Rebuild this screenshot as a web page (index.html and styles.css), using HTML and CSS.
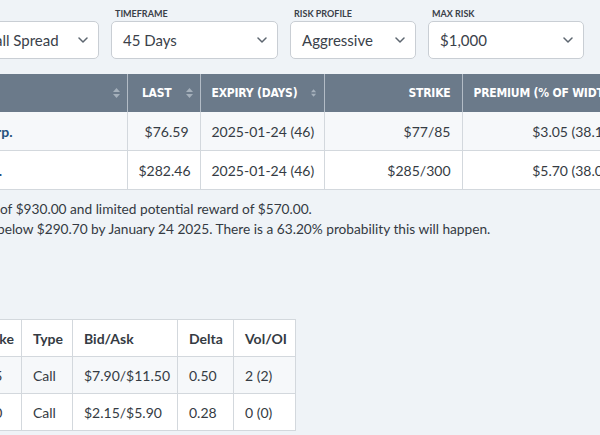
FILE: index.html
```html
<!DOCTYPE html>
<html lang="en">
<head>
<meta charset="utf-8">
<title>Option Screener</title>
<link rel="stylesheet" href="styles.css">
</head>
<body>
<div class="page">
  <div class="filters">
    <div class="field f-strategy">
      <span class="label">Strategy</span>
      <div class="select"><span class="value">Bear Call Spread</span><svg class="chev" width="10" height="6" viewBox="0 0 10 6"><polyline points="1,1 5,5 9,1"/></svg></div>
    </div>
    <div class="field f-timeframe">
      <span class="label">Timeframe</span>
      <div class="select"><span class="value">45 Days</span><svg class="chev" width="10" height="6" viewBox="0 0 10 6"><polyline points="1,1 5,5 9,1"/></svg></div>
    </div>
    <div class="field f-risk">
      <span class="label">Risk Profile</span>
      <div class="select"><span class="value">Aggressive</span><svg class="chev" width="10" height="6" viewBox="0 0 10 6"><polyline points="1,1 5,5 9,1"/></svg></div>
    </div>
    <div class="field f-max">
      <span class="label">Max Risk</span>
      <div class="select"><span class="value">$1,000</span><svg class="chev" width="10" height="6" viewBox="0 0 10 6"><polyline points="1,1 5,5 9,1"/></svg></div>
    </div>
  </div>

  <table class="results">
    <colgroup>
      <col class="w-name"><col class="w-last"><col class="w-expiry"><col class="w-strike"><col class="w-premium">
    </colgroup>
    <thead>
      <tr>
        <th class="left sortable"><span class="th-in">Stock<svg class="sort" width="7" height="10" viewBox="0 0 7 10"><path d="M3.5 0 L7 4 H0 Z M3.5 10 L7 6 H0 Z"/></svg></span></th>
        <th class="right sortable"><span class="th-in th-end">Last<svg class="sort" width="7" height="10" viewBox="0 0 7 10"><path d="M3.5 0 L7 4 H0 Z M3.5 10 L7 6 H0 Z"/></svg></span></th>
        <th class="left sortable"><span class="th-in">Expiry (Days)<svg class="sort" width="7" height="10" viewBox="0 0 7 10"><path d="M3.5 0 L7 4 H0 Z M3.5 10 L7 6 H0 Z"/></svg></span></th>
        <th class="right">Strike</th>
        <th class="left">Premium (% of Width)</th>
      </tr>
    </thead>
    <tbody>
      <tr class="stripe">
        <td><a class="co" href="#">Aon Corp.</a></td>
        <td class="right">$76.59</td>
        <td>2025-01-24 (46)</td>
        <td class="right">$77/85</td>
        <td class="right">$3.05 (38.13%)</td>
      </tr>
      <tr>
        <td><a class="co" href="#">Visa Inc.</a></td>
        <td class="right">$282.46</td>
        <td>2025-01-24 (46)</td>
        <td class="right">$285/300</td>
        <td class="right">$5.70 (38.00%)</td>
      </tr>
    </tbody>
  </table>

  <div class="summary">
    <p>of $930.00 and limited potential reward of $570.00.</p>
    <p class="cont">below $290.70 by January 24 2025. There is a 63.20% probability this will happen.</p>
  </div>

  <table class="legs">
    <colgroup>
      <col class="l-exp"><col class="l-strike"><col class="l-type"><col class="l-bid"><col class="l-delta"><col class="l-vol">
    </colgroup>
    <thead>
      <tr><th>Expiry</th><th>Strike</th><th>Type</th><th>Bid/Ask</th><th>Delta</th><th>Vol/OI</th></tr>
    </thead>
    <tbody>
      <tr class="stripe"><td>2025-01-24</td><td>285</td><td>Call</td><td>$7.90/$11.50</td><td>0.50</td><td>2 (2)</td></tr>
      <tr><td>2025-01-24</td><td>300</td><td>Call</td><td>$2.15/$5.90</td><td>0.28</td><td>0 (0)</td></tr>
    </tbody>
  </table>
</div>
</body>
</html>
```

FILE: styles.css
```css
html, body {
  margin: 0;
  padding: 0;
}
body {
  background: #eff3f7;
  font-family: Lato, "Open Sans", sans-serif;
  color: #353b43;
  overflow: hidden;
  width: 600px;
  height: 435px;
}
.page {
  margin-left: -61px;
  width: 900px;
  padding-top: 8px;
}

/* filters */
.filters {
  display: flex;
  gap: 12px;
}
.field {
  display: flex;
  flex-direction: column;
}
.f-strategy { width: 160px; }
.f-timeframe { width: 167px; }
.f-risk { width: 126px; }
.f-max { width: 156px; }
.label {
  font-size: 9px;
  line-height: 11px;
  font-weight: 700;
  text-transform: uppercase;
  color: #3a4048;
  margin-left: 4px;
  margin-bottom: 2px;
}
.select {
  height: 38px;
  box-sizing: border-box;
  background: #fff;
  border: 1px solid #c9ced4;
  border-radius: 5px;
  display: flex;
  align-items: center;
  justify-content: space-between;
  padding: 0 10px 0 11px;
  font-size: 15px;
  color: #3a414a;
}
.chev polyline {
  fill: none;
  stroke: #5d6670;
  stroke-width: 1.5;
  stroke-linecap: round;
  stroke-linejoin: round;
}

/* results table */
.results {
  margin-top: 15px;
  border-collapse: collapse;
  table-layout: fixed;
  width: 698px;
  font-size: 14px;
}
.w-name { width: 188px; }
.w-last { width: 73px; }
.w-expiry { width: 124px; }
.w-strike { width: 138px; }
.w-premium { width: 175px; }
.results th {
  background: #6b7a8a;
  color: #fff;
  font-family: "DejaVu Sans Condensed", "Liberation Sans Narrow", sans-serif;
  font-stretch: condensed;
  font-weight: 700;
  font-size: 12px;
  letter-spacing: -0.2px;
  text-transform: uppercase;
  height: 38px;
  padding: 0 11px;
  border-left: 1px solid #b3bcc6;
  white-space: nowrap;
  overflow: hidden;
}
.results th.sortable { padding-right: 7px; }
.results th:first-child { border-left: none; }
.th-in {
  display: flex;
  align-items: center;
  justify-content: space-between;
  gap: 14px;
}
.th-end { justify-content: flex-end; }
.results th.right { text-align: right; }
.results th.left { text-align: left; }
.sort path { fill: #a5b0bb; }
.results td {
  height: 38px;
  padding: 0 11px;
  border-bottom: 1px solid #d3d8dd;
  border-left: 1px solid #d3d8dd;
  white-space: nowrap;
  overflow: hidden;
  background: #fff;
}
.results tr.stripe td { background: #f6f8fa; }
.results td:first-child { border-left: none; }
.right { text-align: right; }
.co {
  color: #23507d;
  font-weight: 700;
  text-decoration: none;
}

/* summary */
.summary {
  margin-left: 61px;
  margin-top: 9px;
  font-size: 13.7px;
  line-height: 20px;
  color: #343a42;
}
.summary p { margin: 0; }
.summary .cont { margin-left: -3px; }

/* legs table */
.legs {
  margin-top: 80px;
  margin-left: -83px;
  border-collapse: collapse;
  table-layout: fixed;
  width: 439px;
  background: #fff;
  font-size: 14px;
  color: #353b43;
}
.l-exp { width: 110px; }
.l-strike { width: 55px; }
.l-type { width: 51px; }
.l-bid { width: 105px; }
.l-delta { width: 56px; }
.l-vol { width: 62px; }
.legs th, .legs td {
  height: 36px;
  padding: 0 11px;
  border: 1px solid #d3d8dd;
  text-align: left;
  white-space: nowrap;
}
.legs th { font-weight: 700; background: #fff; }
.legs tr.stripe td { background: #f6f8fa; }
```
